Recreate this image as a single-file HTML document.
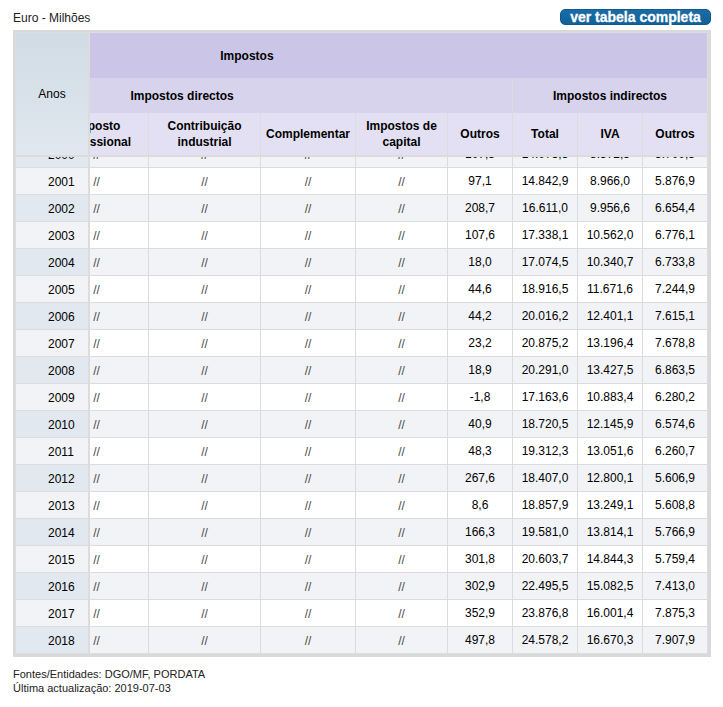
<!DOCTYPE html><html><head><meta charset="utf-8"><style>
html,body{margin:0;padding:0;background:#fff;width:723px;height:707px;overflow:hidden;position:relative}
body{font-family:"Liberation Sans",sans-serif;font-size:12px;color:#000}
.a{position:absolute}
.t{position:absolute;white-space:nowrap;line-height:14px;height:14px}
.c{text-align:center}
.b{font-weight:bold}
.sl{color:#4a4a4a}

</style></head><body>
<div class="t" style="left:13px;top:11px;color:#222">Euro - Milhões</div>
<div class="a" style="left:560px;top:9px;width:151px;height:16px;border-radius:5px;background:linear-gradient(#1b6ca6,#11609a);box-sizing:border-box;border:1px solid #0f5a90"></div>
<div class="t b" style="left:560px;width:151px;top:9px;line-height:16px;height:16px;font-size:14px;color:#fff;text-align:center;-webkit-text-stroke:0.3px #fff">ver tabela completa</div>
<div class="a" style="left:13px;top:30px;width:698px;height:627px;background:#d9d9d9"></div>
<div class="a" style="left:15px;top:32px;width:693px;height:622px;background:#dddddd"></div>
<div class="a" style="left:16px;top:33px;width:691px;height:620px;background:#dcdcdc"></div>
<div class="a" style="left:16px;top:141px;width:72px;height:26px;background:#e1e8f0"></div>
<div class="a" style="left:90px;top:141px;width:58px;height:26px;background:#f1f3f7"></div>
<div class="a" style="left:149px;top:141px;width:111px;height:26px;background:#f1f3f7"></div>
<div class="a" style="left:261px;top:141px;width:94px;height:26px;background:#f1f3f7"></div>
<div class="a" style="left:356px;top:141px;width:91px;height:26px;background:#f1f3f7"></div>
<div class="a" style="left:448px;top:141px;width:64px;height:26px;background:#f1f3f7"></div>
<div class="a" style="left:513px;top:141px;width:64px;height:26px;background:#f1f3f7"></div>
<div class="a" style="left:578px;top:141px;width:64px;height:26px;background:#f1f3f7"></div>
<div class="a" style="left:643px;top:141px;width:64px;height:26px;background:#f1f3f7"></div>
<div class="t" style="left:48px;top:148px">2000</div>
<div class="t c sl" style="left:46.599999999999994px;width:100px;top:148px">//</div>
<div class="t c sl" style="left:154.5px;width:100px;top:148px">//</div>
<div class="t c sl" style="left:258px;width:100px;top:148px">//</div>
<div class="t c sl" style="left:351.5px;width:100px;top:148px">//</div>
<div class="t c" style="left:430px;width:100px;top:147px">107,5</div>
<div class="t c" style="left:495px;width:100px;top:147px">14.073,5</div>
<div class="t c" style="left:560px;width:100px;top:147px">8.372,5</div>
<div class="t c" style="left:625px;width:100px;top:147px">5.700,5</div>
<div class="a" style="left:16px;top:168px;width:72px;height:26px;background:#f1f3f7"></div>
<div class="a" style="left:90px;top:168px;width:58px;height:26px;background:#ffffff"></div>
<div class="a" style="left:149px;top:168px;width:111px;height:26px;background:#ffffff"></div>
<div class="a" style="left:261px;top:168px;width:94px;height:26px;background:#ffffff"></div>
<div class="a" style="left:356px;top:168px;width:91px;height:26px;background:#ffffff"></div>
<div class="a" style="left:448px;top:168px;width:64px;height:26px;background:#ffffff"></div>
<div class="a" style="left:513px;top:168px;width:64px;height:26px;background:#ffffff"></div>
<div class="a" style="left:578px;top:168px;width:64px;height:26px;background:#ffffff"></div>
<div class="a" style="left:643px;top:168px;width:64px;height:26px;background:#ffffff"></div>
<div class="t" style="left:48px;top:175px">2001</div>
<div class="t c sl" style="left:46.599999999999994px;width:100px;top:175px">//</div>
<div class="t c sl" style="left:154.5px;width:100px;top:175px">//</div>
<div class="t c sl" style="left:258px;width:100px;top:175px">//</div>
<div class="t c sl" style="left:351.5px;width:100px;top:175px">//</div>
<div class="t c" style="left:430px;width:100px;top:174px">97,1</div>
<div class="t c" style="left:495px;width:100px;top:174px">14.842,9</div>
<div class="t c" style="left:560px;width:100px;top:174px">8.966,0</div>
<div class="t c" style="left:625px;width:100px;top:174px">5.876,9</div>
<div class="a" style="left:16px;top:195px;width:72px;height:26px;background:#e1e8f0"></div>
<div class="a" style="left:90px;top:195px;width:58px;height:26px;background:#f1f3f7"></div>
<div class="a" style="left:149px;top:195px;width:111px;height:26px;background:#f1f3f7"></div>
<div class="a" style="left:261px;top:195px;width:94px;height:26px;background:#f1f3f7"></div>
<div class="a" style="left:356px;top:195px;width:91px;height:26px;background:#f1f3f7"></div>
<div class="a" style="left:448px;top:195px;width:64px;height:26px;background:#f1f3f7"></div>
<div class="a" style="left:513px;top:195px;width:64px;height:26px;background:#f1f3f7"></div>
<div class="a" style="left:578px;top:195px;width:64px;height:26px;background:#f1f3f7"></div>
<div class="a" style="left:643px;top:195px;width:64px;height:26px;background:#f1f3f7"></div>
<div class="t" style="left:48px;top:202px">2002</div>
<div class="t c sl" style="left:46.599999999999994px;width:100px;top:202px">//</div>
<div class="t c sl" style="left:154.5px;width:100px;top:202px">//</div>
<div class="t c sl" style="left:258px;width:100px;top:202px">//</div>
<div class="t c sl" style="left:351.5px;width:100px;top:202px">//</div>
<div class="t c" style="left:430px;width:100px;top:201px">208,7</div>
<div class="t c" style="left:495px;width:100px;top:201px">16.611,0</div>
<div class="t c" style="left:560px;width:100px;top:201px">9.956,6</div>
<div class="t c" style="left:625px;width:100px;top:201px">6.654,4</div>
<div class="a" style="left:16px;top:222px;width:72px;height:26px;background:#f1f3f7"></div>
<div class="a" style="left:90px;top:222px;width:58px;height:26px;background:#ffffff"></div>
<div class="a" style="left:149px;top:222px;width:111px;height:26px;background:#ffffff"></div>
<div class="a" style="left:261px;top:222px;width:94px;height:26px;background:#ffffff"></div>
<div class="a" style="left:356px;top:222px;width:91px;height:26px;background:#ffffff"></div>
<div class="a" style="left:448px;top:222px;width:64px;height:26px;background:#ffffff"></div>
<div class="a" style="left:513px;top:222px;width:64px;height:26px;background:#ffffff"></div>
<div class="a" style="left:578px;top:222px;width:64px;height:26px;background:#ffffff"></div>
<div class="a" style="left:643px;top:222px;width:64px;height:26px;background:#ffffff"></div>
<div class="t" style="left:48px;top:229px">2003</div>
<div class="t c sl" style="left:46.599999999999994px;width:100px;top:229px">//</div>
<div class="t c sl" style="left:154.5px;width:100px;top:229px">//</div>
<div class="t c sl" style="left:258px;width:100px;top:229px">//</div>
<div class="t c sl" style="left:351.5px;width:100px;top:229px">//</div>
<div class="t c" style="left:430px;width:100px;top:228px">107,6</div>
<div class="t c" style="left:495px;width:100px;top:228px">17.338,1</div>
<div class="t c" style="left:560px;width:100px;top:228px">10.562,0</div>
<div class="t c" style="left:625px;width:100px;top:228px">6.776,1</div>
<div class="a" style="left:16px;top:249px;width:72px;height:26px;background:#e1e8f0"></div>
<div class="a" style="left:90px;top:249px;width:58px;height:26px;background:#f1f3f7"></div>
<div class="a" style="left:149px;top:249px;width:111px;height:26px;background:#f1f3f7"></div>
<div class="a" style="left:261px;top:249px;width:94px;height:26px;background:#f1f3f7"></div>
<div class="a" style="left:356px;top:249px;width:91px;height:26px;background:#f1f3f7"></div>
<div class="a" style="left:448px;top:249px;width:64px;height:26px;background:#f1f3f7"></div>
<div class="a" style="left:513px;top:249px;width:64px;height:26px;background:#f1f3f7"></div>
<div class="a" style="left:578px;top:249px;width:64px;height:26px;background:#f1f3f7"></div>
<div class="a" style="left:643px;top:249px;width:64px;height:26px;background:#f1f3f7"></div>
<div class="t" style="left:48px;top:256px">2004</div>
<div class="t c sl" style="left:46.599999999999994px;width:100px;top:256px">//</div>
<div class="t c sl" style="left:154.5px;width:100px;top:256px">//</div>
<div class="t c sl" style="left:258px;width:100px;top:256px">//</div>
<div class="t c sl" style="left:351.5px;width:100px;top:256px">//</div>
<div class="t c" style="left:430px;width:100px;top:255px">18,0</div>
<div class="t c" style="left:495px;width:100px;top:255px">17.074,5</div>
<div class="t c" style="left:560px;width:100px;top:255px">10.340,7</div>
<div class="t c" style="left:625px;width:100px;top:255px">6.733,8</div>
<div class="a" style="left:16px;top:276px;width:72px;height:26px;background:#f1f3f7"></div>
<div class="a" style="left:90px;top:276px;width:58px;height:26px;background:#ffffff"></div>
<div class="a" style="left:149px;top:276px;width:111px;height:26px;background:#ffffff"></div>
<div class="a" style="left:261px;top:276px;width:94px;height:26px;background:#ffffff"></div>
<div class="a" style="left:356px;top:276px;width:91px;height:26px;background:#ffffff"></div>
<div class="a" style="left:448px;top:276px;width:64px;height:26px;background:#ffffff"></div>
<div class="a" style="left:513px;top:276px;width:64px;height:26px;background:#ffffff"></div>
<div class="a" style="left:578px;top:276px;width:64px;height:26px;background:#ffffff"></div>
<div class="a" style="left:643px;top:276px;width:64px;height:26px;background:#ffffff"></div>
<div class="t" style="left:48px;top:283px">2005</div>
<div class="t c sl" style="left:46.599999999999994px;width:100px;top:283px">//</div>
<div class="t c sl" style="left:154.5px;width:100px;top:283px">//</div>
<div class="t c sl" style="left:258px;width:100px;top:283px">//</div>
<div class="t c sl" style="left:351.5px;width:100px;top:283px">//</div>
<div class="t c" style="left:430px;width:100px;top:282px">44,6</div>
<div class="t c" style="left:495px;width:100px;top:282px">18.916,5</div>
<div class="t c" style="left:560px;width:100px;top:282px">11.671,6</div>
<div class="t c" style="left:625px;width:100px;top:282px">7.244,9</div>
<div class="a" style="left:16px;top:303px;width:72px;height:26px;background:#e1e8f0"></div>
<div class="a" style="left:90px;top:303px;width:58px;height:26px;background:#f1f3f7"></div>
<div class="a" style="left:149px;top:303px;width:111px;height:26px;background:#f1f3f7"></div>
<div class="a" style="left:261px;top:303px;width:94px;height:26px;background:#f1f3f7"></div>
<div class="a" style="left:356px;top:303px;width:91px;height:26px;background:#f1f3f7"></div>
<div class="a" style="left:448px;top:303px;width:64px;height:26px;background:#f1f3f7"></div>
<div class="a" style="left:513px;top:303px;width:64px;height:26px;background:#f1f3f7"></div>
<div class="a" style="left:578px;top:303px;width:64px;height:26px;background:#f1f3f7"></div>
<div class="a" style="left:643px;top:303px;width:64px;height:26px;background:#f1f3f7"></div>
<div class="t" style="left:48px;top:310px">2006</div>
<div class="t c sl" style="left:46.599999999999994px;width:100px;top:310px">//</div>
<div class="t c sl" style="left:154.5px;width:100px;top:310px">//</div>
<div class="t c sl" style="left:258px;width:100px;top:310px">//</div>
<div class="t c sl" style="left:351.5px;width:100px;top:310px">//</div>
<div class="t c" style="left:430px;width:100px;top:309px">44,2</div>
<div class="t c" style="left:495px;width:100px;top:309px">20.016,2</div>
<div class="t c" style="left:560px;width:100px;top:309px">12.401,1</div>
<div class="t c" style="left:625px;width:100px;top:309px">7.615,1</div>
<div class="a" style="left:16px;top:330px;width:72px;height:26px;background:#f1f3f7"></div>
<div class="a" style="left:90px;top:330px;width:58px;height:26px;background:#ffffff"></div>
<div class="a" style="left:149px;top:330px;width:111px;height:26px;background:#ffffff"></div>
<div class="a" style="left:261px;top:330px;width:94px;height:26px;background:#ffffff"></div>
<div class="a" style="left:356px;top:330px;width:91px;height:26px;background:#ffffff"></div>
<div class="a" style="left:448px;top:330px;width:64px;height:26px;background:#ffffff"></div>
<div class="a" style="left:513px;top:330px;width:64px;height:26px;background:#ffffff"></div>
<div class="a" style="left:578px;top:330px;width:64px;height:26px;background:#ffffff"></div>
<div class="a" style="left:643px;top:330px;width:64px;height:26px;background:#ffffff"></div>
<div class="t" style="left:48px;top:337px">2007</div>
<div class="t c sl" style="left:46.599999999999994px;width:100px;top:337px">//</div>
<div class="t c sl" style="left:154.5px;width:100px;top:337px">//</div>
<div class="t c sl" style="left:258px;width:100px;top:337px">//</div>
<div class="t c sl" style="left:351.5px;width:100px;top:337px">//</div>
<div class="t c" style="left:430px;width:100px;top:336px">23,2</div>
<div class="t c" style="left:495px;width:100px;top:336px">20.875,2</div>
<div class="t c" style="left:560px;width:100px;top:336px">13.196,4</div>
<div class="t c" style="left:625px;width:100px;top:336px">7.678,8</div>
<div class="a" style="left:16px;top:357px;width:72px;height:26px;background:#e1e8f0"></div>
<div class="a" style="left:90px;top:357px;width:58px;height:26px;background:#f1f3f7"></div>
<div class="a" style="left:149px;top:357px;width:111px;height:26px;background:#f1f3f7"></div>
<div class="a" style="left:261px;top:357px;width:94px;height:26px;background:#f1f3f7"></div>
<div class="a" style="left:356px;top:357px;width:91px;height:26px;background:#f1f3f7"></div>
<div class="a" style="left:448px;top:357px;width:64px;height:26px;background:#f1f3f7"></div>
<div class="a" style="left:513px;top:357px;width:64px;height:26px;background:#f1f3f7"></div>
<div class="a" style="left:578px;top:357px;width:64px;height:26px;background:#f1f3f7"></div>
<div class="a" style="left:643px;top:357px;width:64px;height:26px;background:#f1f3f7"></div>
<div class="t" style="left:48px;top:364px">2008</div>
<div class="t c sl" style="left:46.599999999999994px;width:100px;top:364px">//</div>
<div class="t c sl" style="left:154.5px;width:100px;top:364px">//</div>
<div class="t c sl" style="left:258px;width:100px;top:364px">//</div>
<div class="t c sl" style="left:351.5px;width:100px;top:364px">//</div>
<div class="t c" style="left:430px;width:100px;top:363px">18,9</div>
<div class="t c" style="left:495px;width:100px;top:363px">20.291,0</div>
<div class="t c" style="left:560px;width:100px;top:363px">13.427,5</div>
<div class="t c" style="left:625px;width:100px;top:363px">6.863,5</div>
<div class="a" style="left:16px;top:384px;width:72px;height:26px;background:#f1f3f7"></div>
<div class="a" style="left:90px;top:384px;width:58px;height:26px;background:#ffffff"></div>
<div class="a" style="left:149px;top:384px;width:111px;height:26px;background:#ffffff"></div>
<div class="a" style="left:261px;top:384px;width:94px;height:26px;background:#ffffff"></div>
<div class="a" style="left:356px;top:384px;width:91px;height:26px;background:#ffffff"></div>
<div class="a" style="left:448px;top:384px;width:64px;height:26px;background:#ffffff"></div>
<div class="a" style="left:513px;top:384px;width:64px;height:26px;background:#ffffff"></div>
<div class="a" style="left:578px;top:384px;width:64px;height:26px;background:#ffffff"></div>
<div class="a" style="left:643px;top:384px;width:64px;height:26px;background:#ffffff"></div>
<div class="t" style="left:48px;top:391px">2009</div>
<div class="t c sl" style="left:46.599999999999994px;width:100px;top:391px">//</div>
<div class="t c sl" style="left:154.5px;width:100px;top:391px">//</div>
<div class="t c sl" style="left:258px;width:100px;top:391px">//</div>
<div class="t c sl" style="left:351.5px;width:100px;top:391px">//</div>
<div class="t c" style="left:430px;width:100px;top:390px">-1,8</div>
<div class="t c" style="left:495px;width:100px;top:390px">17.163,6</div>
<div class="t c" style="left:560px;width:100px;top:390px">10.883,4</div>
<div class="t c" style="left:625px;width:100px;top:390px">6.280,2</div>
<div class="a" style="left:16px;top:411px;width:72px;height:26px;background:#e1e8f0"></div>
<div class="a" style="left:90px;top:411px;width:58px;height:26px;background:#f1f3f7"></div>
<div class="a" style="left:149px;top:411px;width:111px;height:26px;background:#f1f3f7"></div>
<div class="a" style="left:261px;top:411px;width:94px;height:26px;background:#f1f3f7"></div>
<div class="a" style="left:356px;top:411px;width:91px;height:26px;background:#f1f3f7"></div>
<div class="a" style="left:448px;top:411px;width:64px;height:26px;background:#f1f3f7"></div>
<div class="a" style="left:513px;top:411px;width:64px;height:26px;background:#f1f3f7"></div>
<div class="a" style="left:578px;top:411px;width:64px;height:26px;background:#f1f3f7"></div>
<div class="a" style="left:643px;top:411px;width:64px;height:26px;background:#f1f3f7"></div>
<div class="t" style="left:48px;top:418px">2010</div>
<div class="t c sl" style="left:46.599999999999994px;width:100px;top:418px">//</div>
<div class="t c sl" style="left:154.5px;width:100px;top:418px">//</div>
<div class="t c sl" style="left:258px;width:100px;top:418px">//</div>
<div class="t c sl" style="left:351.5px;width:100px;top:418px">//</div>
<div class="t c" style="left:430px;width:100px;top:417px">40,9</div>
<div class="t c" style="left:495px;width:100px;top:417px">18.720,5</div>
<div class="t c" style="left:560px;width:100px;top:417px">12.145,9</div>
<div class="t c" style="left:625px;width:100px;top:417px">6.574,6</div>
<div class="a" style="left:16px;top:438px;width:72px;height:26px;background:#f1f3f7"></div>
<div class="a" style="left:90px;top:438px;width:58px;height:26px;background:#ffffff"></div>
<div class="a" style="left:149px;top:438px;width:111px;height:26px;background:#ffffff"></div>
<div class="a" style="left:261px;top:438px;width:94px;height:26px;background:#ffffff"></div>
<div class="a" style="left:356px;top:438px;width:91px;height:26px;background:#ffffff"></div>
<div class="a" style="left:448px;top:438px;width:64px;height:26px;background:#ffffff"></div>
<div class="a" style="left:513px;top:438px;width:64px;height:26px;background:#ffffff"></div>
<div class="a" style="left:578px;top:438px;width:64px;height:26px;background:#ffffff"></div>
<div class="a" style="left:643px;top:438px;width:64px;height:26px;background:#ffffff"></div>
<div class="t" style="left:48px;top:445px">2011</div>
<div class="t c sl" style="left:46.599999999999994px;width:100px;top:445px">//</div>
<div class="t c sl" style="left:154.5px;width:100px;top:445px">//</div>
<div class="t c sl" style="left:258px;width:100px;top:445px">//</div>
<div class="t c sl" style="left:351.5px;width:100px;top:445px">//</div>
<div class="t c" style="left:430px;width:100px;top:444px">48,3</div>
<div class="t c" style="left:495px;width:100px;top:444px">19.312,3</div>
<div class="t c" style="left:560px;width:100px;top:444px">13.051,6</div>
<div class="t c" style="left:625px;width:100px;top:444px">6.260,7</div>
<div class="a" style="left:16px;top:465px;width:72px;height:26px;background:#e1e8f0"></div>
<div class="a" style="left:90px;top:465px;width:58px;height:26px;background:#f1f3f7"></div>
<div class="a" style="left:149px;top:465px;width:111px;height:26px;background:#f1f3f7"></div>
<div class="a" style="left:261px;top:465px;width:94px;height:26px;background:#f1f3f7"></div>
<div class="a" style="left:356px;top:465px;width:91px;height:26px;background:#f1f3f7"></div>
<div class="a" style="left:448px;top:465px;width:64px;height:26px;background:#f1f3f7"></div>
<div class="a" style="left:513px;top:465px;width:64px;height:26px;background:#f1f3f7"></div>
<div class="a" style="left:578px;top:465px;width:64px;height:26px;background:#f1f3f7"></div>
<div class="a" style="left:643px;top:465px;width:64px;height:26px;background:#f1f3f7"></div>
<div class="t" style="left:48px;top:472px">2012</div>
<div class="t c sl" style="left:46.599999999999994px;width:100px;top:472px">//</div>
<div class="t c sl" style="left:154.5px;width:100px;top:472px">//</div>
<div class="t c sl" style="left:258px;width:100px;top:472px">//</div>
<div class="t c sl" style="left:351.5px;width:100px;top:472px">//</div>
<div class="t c" style="left:430px;width:100px;top:471px">267,6</div>
<div class="t c" style="left:495px;width:100px;top:471px">18.407,0</div>
<div class="t c" style="left:560px;width:100px;top:471px">12.800,1</div>
<div class="t c" style="left:625px;width:100px;top:471px">5.606,9</div>
<div class="a" style="left:16px;top:492px;width:72px;height:26px;background:#f1f3f7"></div>
<div class="a" style="left:90px;top:492px;width:58px;height:26px;background:#ffffff"></div>
<div class="a" style="left:149px;top:492px;width:111px;height:26px;background:#ffffff"></div>
<div class="a" style="left:261px;top:492px;width:94px;height:26px;background:#ffffff"></div>
<div class="a" style="left:356px;top:492px;width:91px;height:26px;background:#ffffff"></div>
<div class="a" style="left:448px;top:492px;width:64px;height:26px;background:#ffffff"></div>
<div class="a" style="left:513px;top:492px;width:64px;height:26px;background:#ffffff"></div>
<div class="a" style="left:578px;top:492px;width:64px;height:26px;background:#ffffff"></div>
<div class="a" style="left:643px;top:492px;width:64px;height:26px;background:#ffffff"></div>
<div class="t" style="left:48px;top:499px">2013</div>
<div class="t c sl" style="left:46.599999999999994px;width:100px;top:499px">//</div>
<div class="t c sl" style="left:154.5px;width:100px;top:499px">//</div>
<div class="t c sl" style="left:258px;width:100px;top:499px">//</div>
<div class="t c sl" style="left:351.5px;width:100px;top:499px">//</div>
<div class="t c" style="left:430px;width:100px;top:498px">8,6</div>
<div class="t c" style="left:495px;width:100px;top:498px">18.857,9</div>
<div class="t c" style="left:560px;width:100px;top:498px">13.249,1</div>
<div class="t c" style="left:625px;width:100px;top:498px">5.608,8</div>
<div class="a" style="left:16px;top:519px;width:72px;height:26px;background:#e1e8f0"></div>
<div class="a" style="left:90px;top:519px;width:58px;height:26px;background:#f1f3f7"></div>
<div class="a" style="left:149px;top:519px;width:111px;height:26px;background:#f1f3f7"></div>
<div class="a" style="left:261px;top:519px;width:94px;height:26px;background:#f1f3f7"></div>
<div class="a" style="left:356px;top:519px;width:91px;height:26px;background:#f1f3f7"></div>
<div class="a" style="left:448px;top:519px;width:64px;height:26px;background:#f1f3f7"></div>
<div class="a" style="left:513px;top:519px;width:64px;height:26px;background:#f1f3f7"></div>
<div class="a" style="left:578px;top:519px;width:64px;height:26px;background:#f1f3f7"></div>
<div class="a" style="left:643px;top:519px;width:64px;height:26px;background:#f1f3f7"></div>
<div class="t" style="left:48px;top:526px">2014</div>
<div class="t c sl" style="left:46.599999999999994px;width:100px;top:526px">//</div>
<div class="t c sl" style="left:154.5px;width:100px;top:526px">//</div>
<div class="t c sl" style="left:258px;width:100px;top:526px">//</div>
<div class="t c sl" style="left:351.5px;width:100px;top:526px">//</div>
<div class="t c" style="left:430px;width:100px;top:525px">166,3</div>
<div class="t c" style="left:495px;width:100px;top:525px">19.581,0</div>
<div class="t c" style="left:560px;width:100px;top:525px">13.814,1</div>
<div class="t c" style="left:625px;width:100px;top:525px">5.766,9</div>
<div class="a" style="left:16px;top:546px;width:72px;height:26px;background:#f1f3f7"></div>
<div class="a" style="left:90px;top:546px;width:58px;height:26px;background:#ffffff"></div>
<div class="a" style="left:149px;top:546px;width:111px;height:26px;background:#ffffff"></div>
<div class="a" style="left:261px;top:546px;width:94px;height:26px;background:#ffffff"></div>
<div class="a" style="left:356px;top:546px;width:91px;height:26px;background:#ffffff"></div>
<div class="a" style="left:448px;top:546px;width:64px;height:26px;background:#ffffff"></div>
<div class="a" style="left:513px;top:546px;width:64px;height:26px;background:#ffffff"></div>
<div class="a" style="left:578px;top:546px;width:64px;height:26px;background:#ffffff"></div>
<div class="a" style="left:643px;top:546px;width:64px;height:26px;background:#ffffff"></div>
<div class="t" style="left:48px;top:553px">2015</div>
<div class="t c sl" style="left:46.599999999999994px;width:100px;top:553px">//</div>
<div class="t c sl" style="left:154.5px;width:100px;top:553px">//</div>
<div class="t c sl" style="left:258px;width:100px;top:553px">//</div>
<div class="t c sl" style="left:351.5px;width:100px;top:553px">//</div>
<div class="t c" style="left:430px;width:100px;top:552px">301,8</div>
<div class="t c" style="left:495px;width:100px;top:552px">20.603,7</div>
<div class="t c" style="left:560px;width:100px;top:552px">14.844,3</div>
<div class="t c" style="left:625px;width:100px;top:552px">5.759,4</div>
<div class="a" style="left:16px;top:573px;width:72px;height:26px;background:#e1e8f0"></div>
<div class="a" style="left:90px;top:573px;width:58px;height:26px;background:#f1f3f7"></div>
<div class="a" style="left:149px;top:573px;width:111px;height:26px;background:#f1f3f7"></div>
<div class="a" style="left:261px;top:573px;width:94px;height:26px;background:#f1f3f7"></div>
<div class="a" style="left:356px;top:573px;width:91px;height:26px;background:#f1f3f7"></div>
<div class="a" style="left:448px;top:573px;width:64px;height:26px;background:#f1f3f7"></div>
<div class="a" style="left:513px;top:573px;width:64px;height:26px;background:#f1f3f7"></div>
<div class="a" style="left:578px;top:573px;width:64px;height:26px;background:#f1f3f7"></div>
<div class="a" style="left:643px;top:573px;width:64px;height:26px;background:#f1f3f7"></div>
<div class="t" style="left:48px;top:580px">2016</div>
<div class="t c sl" style="left:46.599999999999994px;width:100px;top:580px">//</div>
<div class="t c sl" style="left:154.5px;width:100px;top:580px">//</div>
<div class="t c sl" style="left:258px;width:100px;top:580px">//</div>
<div class="t c sl" style="left:351.5px;width:100px;top:580px">//</div>
<div class="t c" style="left:430px;width:100px;top:579px">302,9</div>
<div class="t c" style="left:495px;width:100px;top:579px">22.495,5</div>
<div class="t c" style="left:560px;width:100px;top:579px">15.082,5</div>
<div class="t c" style="left:625px;width:100px;top:579px">7.413,0</div>
<div class="a" style="left:16px;top:600px;width:72px;height:26px;background:#f1f3f7"></div>
<div class="a" style="left:90px;top:600px;width:58px;height:26px;background:#ffffff"></div>
<div class="a" style="left:149px;top:600px;width:111px;height:26px;background:#ffffff"></div>
<div class="a" style="left:261px;top:600px;width:94px;height:26px;background:#ffffff"></div>
<div class="a" style="left:356px;top:600px;width:91px;height:26px;background:#ffffff"></div>
<div class="a" style="left:448px;top:600px;width:64px;height:26px;background:#ffffff"></div>
<div class="a" style="left:513px;top:600px;width:64px;height:26px;background:#ffffff"></div>
<div class="a" style="left:578px;top:600px;width:64px;height:26px;background:#ffffff"></div>
<div class="a" style="left:643px;top:600px;width:64px;height:26px;background:#ffffff"></div>
<div class="t" style="left:48px;top:607px">2017</div>
<div class="t c sl" style="left:46.599999999999994px;width:100px;top:607px">//</div>
<div class="t c sl" style="left:154.5px;width:100px;top:607px">//</div>
<div class="t c sl" style="left:258px;width:100px;top:607px">//</div>
<div class="t c sl" style="left:351.5px;width:100px;top:607px">//</div>
<div class="t c" style="left:430px;width:100px;top:606px">352,9</div>
<div class="t c" style="left:495px;width:100px;top:606px">23.876,8</div>
<div class="t c" style="left:560px;width:100px;top:606px">16.001,4</div>
<div class="t c" style="left:625px;width:100px;top:606px">7.875,3</div>
<div class="a" style="left:16px;top:627px;width:72px;height:26px;background:#e1e8f0"></div>
<div class="a" style="left:90px;top:627px;width:58px;height:26px;background:#f1f3f7"></div>
<div class="a" style="left:149px;top:627px;width:111px;height:26px;background:#f1f3f7"></div>
<div class="a" style="left:261px;top:627px;width:94px;height:26px;background:#f1f3f7"></div>
<div class="a" style="left:356px;top:627px;width:91px;height:26px;background:#f1f3f7"></div>
<div class="a" style="left:448px;top:627px;width:64px;height:26px;background:#f1f3f7"></div>
<div class="a" style="left:513px;top:627px;width:64px;height:26px;background:#f1f3f7"></div>
<div class="a" style="left:578px;top:627px;width:64px;height:26px;background:#f1f3f7"></div>
<div class="a" style="left:643px;top:627px;width:64px;height:26px;background:#f1f3f7"></div>
<div class="t" style="left:48px;top:634px">2018</div>
<div class="t c sl" style="left:46.599999999999994px;width:100px;top:634px">//</div>
<div class="t c sl" style="left:154.5px;width:100px;top:634px">//</div>
<div class="t c sl" style="left:258px;width:100px;top:634px">//</div>
<div class="t c sl" style="left:351.5px;width:100px;top:634px">//</div>
<div class="t c" style="left:430px;width:100px;top:633px">497,8</div>
<div class="t c" style="left:495px;width:100px;top:633px">24.578,2</div>
<div class="t c" style="left:560px;width:100px;top:633px">16.670,3</div>
<div class="t c" style="left:625px;width:100px;top:633px">7.907,9</div>
<div class="a" style="left:16px;top:33px;width:691px;height:124px;background:#dcdcdc"></div>
<div class="a" style="left:16px;top:33px;width:72px;height:122px;background:linear-gradient(#d0dce5,#e0e7ef)"></div>
<div class="a" style="left:90px;top:33px;width:617px;height:45px;background:#cbc6e7"></div>
<div class="a" style="left:90px;top:78px;width:422px;height:35px;background:#d7d3ed"></div>
<div class="a" style="left:513px;top:78px;width:194px;height:35px;background:#d7d3ed"></div>
<div class="a" style="left:90px;top:113px;width:58px;height:42px;background:#e3e0f3"></div>
<div class="a" style="left:149px;top:113px;width:111px;height:42px;background:#e3e0f3"></div>
<div class="a" style="left:261px;top:113px;width:94px;height:42px;background:#e3e0f3"></div>
<div class="a" style="left:356px;top:113px;width:91px;height:42px;background:#e3e0f3"></div>
<div class="a" style="left:448px;top:113px;width:64px;height:42px;background:#e3e0f3"></div>
<div class="a" style="left:513px;top:113px;width:64px;height:42px;background:#e3e0f3"></div>
<div class="a" style="left:578px;top:113px;width:64px;height:42px;background:#e3e0f3"></div>
<div class="a" style="left:643px;top:113px;width:64px;height:42px;background:#e3e0f3"></div>
<div class="t" style="left:16px;width:72px;top:87px;text-align:center">Anos</div>
<div class="t c b" style="left:146.9px;width:200px;top:49px">Impostos</div>
<div class="t c b" style="left:82.1px;width:200px;top:89px">Impostos directos</div>
<div class="t c b" style="left:510px;width:200px;top:89px">Impostos indirectos</div>
<div class="a" style="left:90px;top:113px;width:58px;height:42px;overflow:hidden"><div class="t c b" style="left:-52.900000000000006px;width:120px;top:5px;height:32px;line-height:16px">Imposto<br>profissional</div></div>
<div class="t c b" style="left:144.5px;width:120px;top:118px;height:32px;line-height:16px">Contribuição<br>industrial</div>
<div class="t c b" style="left:248px;width:120px;top:127px">Complementar</div>
<div class="t c b" style="left:341.5px;width:120px;top:118px;height:32px;line-height:16px">Impostos de<br>capital</div>
<div class="t c b" style="left:420px;width:120px;top:127px">Outros</div>
<div class="t c b" style="left:485px;width:120px;top:127px">Total</div>
<div class="t c b" style="left:550px;width:120px;top:127px">IVA</div>
<div class="t c b" style="left:615px;width:120px;top:127px">Outros</div>
<div class="a" style="left:16px;top:33px;width:72px;height:122px;background:linear-gradient(#d0dce5,#e0e7ef)"></div>
<div class="t" style="left:16px;width:72px;top:87px;text-align:center">Anos</div>
<div class="t" style="left:13px;top:668px;font-size:11px;line-height:13.5px;height:30px;color:#222">Fontes/Entidades: DGO/MF, PORDATA<br>Última actualização: 2019-07-03</div>
</body></html>
